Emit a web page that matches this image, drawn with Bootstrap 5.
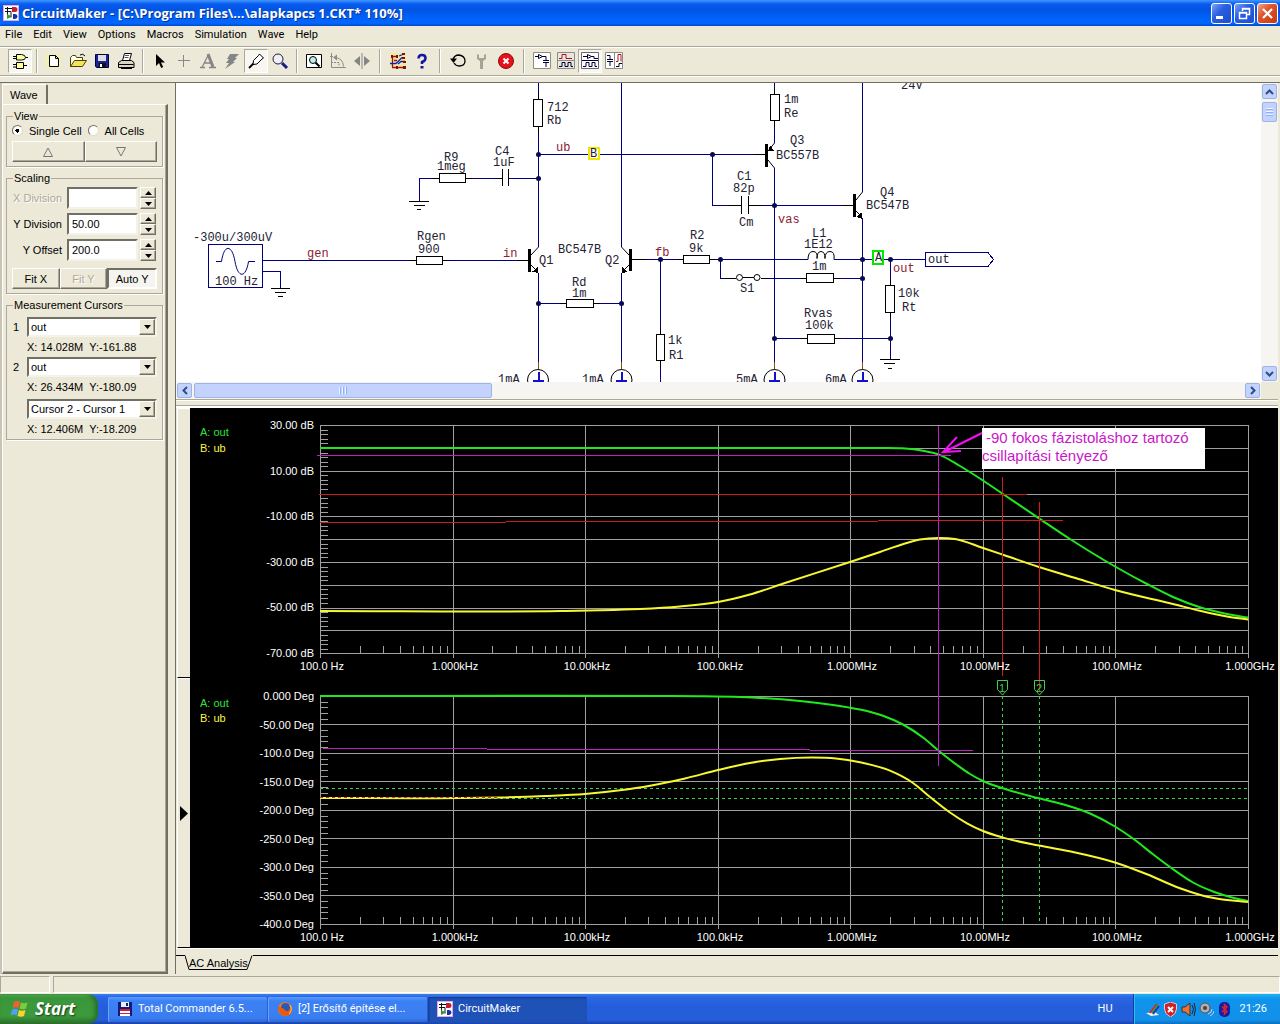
<!DOCTYPE html>
<html lang="en">
<head>
<meta charset="utf-8">
<meta name="viewport" content="width=device-width, initial-scale=1">
<title>CircuitMaker</title>
<link rel="stylesheet" href="https://cdn.jsdelivr.net/npm/bootstrap@5.3.0/dist/css/bootstrap.min.css">
<style>
:root{--face:#ece9d8;--shade:#aca899;--dark:#716f64}
body{background:var(--face);color:#000;font:11px/14px "Liberation Sans",Arial,sans-serif}
button,input,select{font:inherit;color:inherit;border-radius:0}
svg{display:block}
.ui-font{font-family:Roboto,"Noto Sans",sans-serif}
.titlebar{height:26px;background:linear-gradient(#3f97ff 0,#0a5cf0 4px,#0054e3 10px,#0062fb 18px,#0268ff 23px,#0048d0 26px);color:#fff;padding:0 2px 0 3px}
.titlebar h1{font:bold 13px/26px "Open Sans","Noto Sans",sans-serif;text-shadow:1px 1px 0 #0a2f8c;padding-left:3px}
.win-set{gap:2px}
.win-btn{width:21px;height:21px;border:1px solid #fff;border-radius:3px;padding:0;background:linear-gradient(135deg,#7fa5f5,#2a5fdf 40%,#1d4fd0)}
.win-close{background:linear-gradient(135deg,#f0a58c,#e0532c 40%,#c33a12)}
.menubar{height:20px;padding-left:5px;gap:11px}
.menubar a{color:#000;text-decoration:none;line-height:18px}
.toolbar{height:30px;border-top:1px solid var(--shade);box-shadow:inset 0 1px #fff,0 1px #fff;border-bottom:1px solid var(--shade);padding-left:8px}
.tool{width:24px;height:24px;border:1px solid transparent;background:none;padding:0;display:flex;align-items:center;justify-content:center}
.tool.on{background:#f7f6f0;border-color:var(--shade) #fff #fff var(--shade)}
.tsep{width:10px;height:24px;display:flex;justify-content:center}
.tsep::before{content:"";width:2px;background:var(--shade);border-right:1px solid #fff}
.tsep.wide{width:12px}
.workspace{margin-top:6px;border-top:1px solid var(--dark)}
.side{width:175px;padding:1px 7px 0 0;border-left:2px solid #c9c5b5}
.side-tab{width:46px;height:20px;border:1px solid #fff;border-bottom:0;border-right:2px solid var(--dark);border-radius:2px 2px 0 0;background:none;padding:0 0 0 7px;text-align:left;font-size:11px}
.side-page{border:1px solid #fff;border-right:2px solid var(--dark);border-bottom:2px solid var(--dark);padding:5px 3px;gap:5px;box-shadow:inset -1px -1px var(--shade)}
fieldset.gbox{border:1px solid var(--shade);box-shadow:1px 1px #fff;padding:0 5px 4px}
.gbox legend{float:none;width:auto;margin:0 0 0 1px;padding:0 1px;font-size:11px;line-height:12px}
.opts{gap:6px}
.opt{height:17px;gap:6px;display:flex;align-items:center}
.opt input{appearance:none;width:11px;height:11px;border-radius:50%;margin:0;border:1px solid var(--dark);border-right-color:#e0dcc9;border-bottom-color:#e0dcc9;background:#fff}
.opt input:checked{background:radial-gradient(circle,#000 2px,#fff 2px)}
.raised{background:var(--face);border:1px solid #fff;border-right-color:var(--dark);border-bottom-color:var(--dark);box-shadow:inset -1px -1px var(--shade);padding:0}
.sunk{background:#f5f4ee;border:2px solid;border-color:var(--dark) #fff #fff var(--dark);padding:0}
.wbtn{height:21px;flex:1 1 0;min-width:0}
.off,.wbtn:disabled{color:var(--shade);text-shadow:1px 1px #fff}
.srow{height:22px;gap:2px}
.srow label{width:50px;text-align:right;margin-right:3px;white-space:nowrap}
.well{background:#fff;border:2px solid;border-color:var(--dark) #f5f3e8 #f5f3e8 var(--dark)}
.srow input{width:71px;height:22px;padding:0 3px;border-radius:0}
.spin{width:16px}
.spin button{height:11px;display:flex;align-items:center;justify-content:center}
.crow{height:20px;gap:6px}
.crow .num{width:8px;padding-top:3px;margin-left:1px}
.crow .well{height:20px}
.crow select{appearance:none;border:0;background:#fff;padding:0 0 0 2px;min-width:0;outline:0}
.crow .drop{width:16px;display:flex;align-items:center;justify-content:center}
.cval{line-height:20px;padding-left:15px;white-space:pre}
.docs{border-left:1px solid var(--dark);padding-right:2px;min-width:0}
.sheet{height:299px;background:#fff}
.sheet-view{min-width:0}
#schematic{width:1085px;height:299px;flex:none}
.vbar{width:17px;background:#f6f5f1}
.hbar{height:17px;background:#f6f5f1}
.sb{width:15px;height:15px;margin:1px;padding:0;border:1px solid #9ab4e8;border-radius:2px;background:#c3d3fd;display:flex;align-items:center;justify-content:center}
.hthumb{width:298px}
.vthumb{height:20px;margin-top:2px}
.corner{width:17px;background:var(--face)}
.splitter{height:9px;border-top:1px solid var(--shade);box-shadow:inset 0 1px #fff,inset 0 -2px #fff,inset 0 -3px var(--shade)}
.gutter{width:14px;padding-left:1px}
.gutter div{flex:1 1 0;border-left:1px solid #fff;border-top:1px solid #fff;border-bottom:1px solid #000}
.plots{background:#000;min-width:0}
.plots svg{width:100%;height:auto}
.note{font:15px "Liberation Sans",Arial,sans-serif;fill:#c818c8}
.sheet-tabs{height:26px;padding-top:6px;border-top:1px solid #fff}
.sheet-tabs .lead-line{width:9px;border-top:1px solid #000;height:1px}
.sheet-tabs .rest-line{border-top:1px solid #000;height:1px}
.statusbar{height:17px;gap:3px;margin:2px 0 1px}
.statusbar div{border:1px solid var(--shade);border-right-color:#fff;border-bottom-color:#fff}
.statusbar .cell{width:50px}
.taskbar{height:30px;background:linear-gradient(#3a80f2 0,#2a66e4 3px,#245edb 12px,#245edb 26px,#1941a5 30px);color:#fff}
.start{width:98px;border:0;border-radius:0 10px 10px 0;background:linear-gradient(#5fb85f 0,#3a963a 4px,#3c9a3c 22px,#2a702a 30px);box-shadow:inset -3px 0 4px #2a6d2a;color:#fff;font:italic bold 17px/30px "Open Sans","Noto Sans",sans-serif;text-shadow:1px 1px 2px #143d14;padding:0 0 0 10px;gap:5px}
.tasks{gap:1px;margin-left:10px}
.task{width:159px;height:25px;border:0;border-radius:2px;background:linear-gradient(#5a9bff,#3c81f3 4px,#3a7df0 21px,#2d68d8);box-shadow:inset 1px 0 #6aa2f8;color:#fff;padding:0 0 0 9px;gap:5px}
.task.cur{background:#1e52b7;box-shadow:inset 1px 1px 2px #123a8a}
.lang{padding-right:20px}
.tray{background:linear-gradient(#1fb2f5,#0f93ec 5px,#1290e8 26px,#0a6cc0);border-left:1px solid #0c3f9e;box-shadow:inset 1px 0 #35b8f5;padding:0 13px 0 11px;gap:3px}
.tray time{padding-left:5px}
.net{font:12px "Liberation Mono","Courier New",monospace;fill:#223}
.net .nm{fill:#8b2233}
.lbl{font:11px "Liberation Sans",Arial,sans-serif;fill:#fff}
</style>
<script src="https://cdn.jsdelivr.net/npm/bootstrap@5.3.0/dist/js/bootstrap.bundle.min.js"></script>
</head>
<body class="d-flex flex-column min-vh-100 m-0">
<svg width="0" height="0" class="position-absolute" aria-hidden="true">
  <symbol id="appicon" viewBox="0 0 16 16"><rect width="16" height="16" fill="#e8a8d8"/><rect x="1" y="1" width="14" height="14" fill="#fff"/><path d="M2 3.500h7M4.500 2v10M2 6.500h6v6" stroke="#111" fill="none"/><path d="M9 2h3a2.500 2.500 0 0 1 0 5H9z" fill="#c02030"/><path d="M4 9l5 2.500L4 14z" fill="#2a9a3a"/><path d="M10 9h2a2.500 2.500 0 0 1 0 5h-2z" fill="#1830b0"/></symbol>
  <symbol id="up" viewBox="0 0 7 4"><path d="M0 4L3.500 0 7 4z" fill="#000"/></symbol>
  <symbol id="down" viewBox="0 0 7 4"><path d="M0 0h7L3.500 4z" fill="#000"/></symbol>
</svg>

<header class="titlebar d-flex align-items-center">
  <svg width="16" height="16"><use href="#appicon"/></svg>
  <h1 class="m-0 flex-fill text-truncate">CircuitMaker - [C:\Program Files\...\alapkapcs 1.CKT* 110%]</h1>
  <div class="win-set d-flex">
    <button class="win-btn" aria-label="Minimize"><svg viewBox="0 0 19 19"><path d="M4 12h7v3H4z" fill="#fff"/></svg></button>
    <button class="win-btn" aria-label="Restore"><svg viewBox="0 0 19 19" fill="none" stroke="#fff"><path d="M7.500 7V4.500h7v6H12M7 5h8M4.500 8.500h7v6h-7zM4 9h8" stroke-width="1.500"/></svg></button>
    <button class="win-btn win-close" aria-label="Close"><svg viewBox="0 0 19 19"><path d="M5 5l9 9M14 5l-9 9" stroke="#fff" stroke-width="2.200"/></svg></button>
  </div>
</header>
<nav class="menubar ui-font d-flex">
  <a href="#">File</a><a href="#">Edit</a><a href="#">View</a><a href="#">Options</a><a href="#">Macros</a><a href="#">Simulation</a><a href="#">Wave</a><a href="#">Help</a>
</nav>
<div class="toolbar d-flex align-items-center" role="toolbar">
  <button class="tool on" aria-label="Parts"><svg width="18" height="18" fill="#fff" stroke="#000"><path d="M5.500 2.500h5q4 .5 4 3t-4 2.500h-5z" fill="#ff9"/><path d="M2 4.500h3M2 6.500h3M14.500 5.500H17M5.500 10.500h7v6h-7zM2 12.500h3M2 15h3M13 13.500h3"/><path d="M6 11h6v5H6z" fill="#ff9" stroke="none"/></svg></button>
  <span class="tsep"></span>
  <button class="tool" aria-label="New"><svg width="18" height="18"><path d="M1 2h15v14H1z" fill="#ffff60" opacity=".35"/><path d="M4.500 3.500h6l3 3v8h-9zM10.500 3.500v3h3" fill="#fff" stroke="#000"/></svg></button>
  <button class="tool" aria-label="Open"><svg width="18" height="18"><path d="M1.500 14.500v-9l2-2h3l1 2h6v3" fill="#ffe" stroke="#4a4200"/><path d="M1.500 14.500l4-6h12l-4 6z" fill="#f5e45a" stroke="#4a4200"/><path d="M11 3q3-2 5 1" fill="none" stroke="#000"/></svg></button>
  <button class="tool" aria-label="Save"><svg width="18" height="18"><path d="M2.500 2.500h13v13h-12l-1-1z" fill="#1c2490" stroke="#000040"/><path d="M5 3h8v6H5z" fill="#dcdce4"/><path d="M6 11h7v4H6z" fill="#111"/><path d="M7 12h2v3H7z" fill="#fff"/></svg></button>
  <button class="tool" aria-label="Print"><svg width="18" height="18" stroke="#000" fill="#d8d5c5"><path d="M5.500 8.500l2-7h7l-2 7z" fill="#fff"/><path d="M8 3.500h4M7.500 5.500h4" stroke="#555"/><path d="M1.500 10.500l3-2h10l2.500 2v5h-15.500zM1.500 12.500h15M4 16.500h11"/></svg></button>
  <span class="tsep"></span>
  <button class="tool" aria-label="Arrow"><svg width="18" height="18"><path d="M5 2v12l3-3 2.200 5 2-1L10 10.500h4z"/></svg></button>
  <button class="tool" aria-label="Wire"><svg width="18" height="18"><path d="M3 8.500h12M8.500 3v12" stroke="#888"/></svg></button>
  <button class="tool" aria-label="Text"><svg width="18" height="18" fill="none" stroke="#858585"><path d="M3 15.500l6-12M5 11h7" stroke-width="1.300"/><path d="M9 2l5 13" stroke-width="3"/><path d="M1 15.500h5M10 15.500h7" stroke-width="1.500"/></svg></button>
  <button class="tool" aria-label="Delete"><svg width="18" height="18"><path d="M7 2h9l-4 4h2l-4 4h2l-10 7 4-6H3l3-4H4z" fill="#858585"/></svg></button>
  <button class="tool on" aria-label="Probe"><svg width="18" height="18" fill="#fff" stroke="#000"><path d="M2 16l5-5" stroke-width="1.800"/><path d="M6.500 8.500l5-5 1-1.500 4 4-1.500 1-5 5-4 .5z"/></svg></button>
  <button class="tool" aria-label="Zoom"><svg width="18" height="18"><circle cx="7" cy="7" r="5" fill="#eef" stroke="#222"/><path d="M11 11l5 5" stroke="#1a1a90" stroke-width="3"/></svg></button>
  <span class="tsep"></span>
  <button class="tool" aria-label="Fit"><svg width="18" height="18" fill="none" stroke="#000"><path d="M1.500 2.500h15v13h-15z" fill="#fff"/><circle cx="8" cy="8" r="3.500" fill="#bee"/><path d="M10.500 10.500l4 4" stroke-width="2"/></svg></button>
  <button class="tool" aria-label="Rotate"><svg width="18" height="18" fill="none" stroke="#8c8c84"><path d="M2.500 1v14.500H17M1 4.500h3M5 5.500q9 0 9.500 9" /><path d="M2 10.500h8v4" stroke-dasharray="2 1"/><path d="M4 5.500l4-3v6z" fill="#8c8c84" stroke="none"/></svg></button>
  <button class="tool" aria-label="Mirror"><svg width="18" height="18" fill="#858585"><path d="M7 4v10L1 9zM11 4v10l6-5zM8.500 1h1v16h-1z"/></svg></button>
  <span class="tsep wide"></span>
  <button class="tool" aria-label="Trace"><svg width="18" height="18" fill="none"><path d="M1 1h16v15H1z" fill="#ffe860" opacity=".4"/><path d="M3 4.500h5M3.500 4v11M3 15.500h13M5 8.500h3" stroke="#a01010" stroke-width="1.300"/><path d="M1 11.500h6l6-6M10 4l5-2M9 12l3-2.500h4" stroke="#1020b0" stroke-width="1.300"/><path d="M2 3h2v3H2zM13 1h3v2h-3zM13 5h3v2h-3zM14 9h3v2h-3zM14 14h3v3h-3zM7 14h2v3H7zM7 3h2v3H7z" fill="#801010"/></svg></button>
  <button class="tool" aria-label="Help"><svg width="18" height="18"><path d="M5.500 6.500q0-3.500 3.500-3.500t3.500 3-3.500 4v2" fill="none" stroke="#1414a8" stroke-width="2.500"/><path d="M7.500 14h3v2.500h-3z" fill="#1414a8"/></svg></button>
  <span class="tsep wide"></span>
  <button class="tool" aria-label="Reset"><svg width="18" height="18"><path d="M4 8q1-5 6-5 6 1 6 6t-6 5q-3 0-5-3" fill="none" stroke="#000" stroke-width="1.300"/><path d="M1 6.500h7L4.500 11z"/></svg></button>
  <button class="tool" aria-label="Setup"><svg width="18" height="18"><path d="M4 2v5l3 2v8h3V9l3-2V2l-2 1v3H6V3z" fill="#a5a398"/></svg></button>
  <button class="tool" aria-label="Stop"><svg width="18" height="18"><circle cx="9" cy="9" r="7.500" fill="#e8101a" stroke="#8c0a0a"/><path d="M6.500 6.500l5 5M11.500 6.500l-5 5" stroke="#fff" stroke-width="2"/></svg></button>
  <span class="tsep wide"></span>
  <button class="tool" aria-label="Schematic only"><svg width="18" height="18" fill="#fff" stroke="#003"><path d="M.5.5h17v16H.500z" stroke="#8c8c84"/><path d="M2 4.500h3M5.500 2.500l4 2-4 2zM9 4.500h4v4M10 8.500h6M10 10.500h6M13 11v4"/></svg></button>
  <button class="tool" aria-label="Waves only"><svg width="18" height="18" fill="none" stroke="#003"><path d="M.5.500h17v16H.500z" fill="#e8e6e0" stroke="#8c8c84"/><path d="M2 6.500h3v-4h4v4h6" stroke="#b01020"/><path d="M1 8.500h16" stroke="#8c8c84"/><path d="M2 14.500h3v-4h3v4h3v-4h3v4h2"/></svg></button>
  <button class="tool on" aria-label="Split horizontally"><svg width="18" height="18" fill="none" stroke="#003"><path d="M.5.500h17v16H.500z" fill="#fff" stroke="#667"/><path d="M2 4.500h4M6.500 2.500l4 2-4 2zM10 4.500h3v2h4M1 8.500h16M2 14.500h3v-4h3v4h3v-4h3v4h2"/></svg></button>
  <button class="tool" aria-label="Split vertically"><svg width="18" height="18" fill="none" stroke="#003"><path d="M.5.500h17v16H.500z" fill="#fff" stroke="#8c8c84"/><path d="M9.500 1v15" stroke="#8c8c84"/><path d="M2 3.500h3v4M2 7.500h6M2 9.500h6M5 10v4"/><path d="M11 9.500h2v-7h3v7" stroke="#b01020"/><path d="M11 14.500h3v-3h3" /></svg></button>
</div>

<main class="workspace d-flex flex-fill">
  <aside class="side d-flex flex-column flex-shrink-0">
    <button class="side-tab">Wave</button>
    <div class="side-page d-flex flex-column flex-fill">
      <fieldset class="gbox">
        <legend>View</legend>
        <div class="opts d-flex">
          <label class="opt"><input type="radio" name="cells" checked>Single Cell</label>
          <label class="opt"><input type="radio" name="cells">All Cells</label>
        </div>
        <div class="d-flex" style="padding-top:2px">
          <button class="raised wbtn" aria-label="Previous cell"><svg class="mx-auto" width="10" height="10" fill="none" stroke="#777"><path d="M.5 9.500h9L5 1z"/></svg></button>
          <button class="raised wbtn" aria-label="Next cell"><svg class="mx-auto" width="10" height="10" fill="none" stroke="#777"><path d="M.5.500h9L5 9z"/></svg></button>
        </div>
      </fieldset>
      <fieldset class="gbox">
        <legend>Scaling</legend>
        <div class="d-flex flex-column gap-1" style="padding-top:3px">
          <div class="srow d-flex align-items-center"><label for="xd" class="off">X Division</label><input id="xd" class="well" value="" disabled><div class="spin"><button class="raised w-100" aria-label="Increase X Division"><svg width="7" height="4"><use href="#up"/></svg></button><button class="raised w-100" aria-label="Decrease X Division"><svg width="7" height="4"><use href="#down"/></svg></button></div></div>
          <div class="srow d-flex align-items-center"><label for="yd">Y Division</label><input id="yd" class="well" value="50.00"><div class="spin"><button class="raised w-100" aria-label="Increase Y Division"><svg width="7" height="4"><use href="#up"/></svg></button><button class="raised w-100" aria-label="Decrease Y Division"><svg width="7" height="4"><use href="#down"/></svg></button></div></div>
          <div class="srow d-flex align-items-center"><label for="yo">Y Offset</label><input id="yo" class="well" value="200.0"><div class="spin"><button class="raised w-100" aria-label="Increase Y Offset"><svg width="7" height="4"><use href="#up"/></svg></button><button class="raised w-100" aria-label="Decrease Y Offset"><svg width="7" height="4"><use href="#down"/></svg></button></div></div>
        </div>
        <div class="d-flex" style="padding-top:7px">
          <button class="raised wbtn">Fit X</button><button class="raised wbtn" disabled>Fit Y</button><button class="sunk wbtn">Auto Y</button>
        </div>
      </fieldset>
      <fieldset class="gbox pb-0">
        <legend>Measurement Cursors</legend>
        <div style="padding-top:6px">
          <div class="crow d-flex"><label class="num" for="c1">1</label><div class="well d-flex flex-fill"><select id="c1" class="flex-fill"><option>out</option><option>ub</option></select><span class="drop raised"><svg width="7" height="4"><use href="#down"/></svg></span></div></div>
          <div class="cval">X: 14.028M  Y:-161.88</div>
          <div class="crow d-flex"><label class="num" for="c2">2</label><div class="well d-flex flex-fill"><select id="c2" class="flex-fill"><option>out</option><option>ub</option></select><span class="drop raised"><svg width="7" height="4"><use href="#down"/></svg></span></div></div>
          <div class="cval">X: 26.434M  Y:-180.09</div>
          <div class="crow d-flex" style="margin-top:2px"><span class="num"></span><div class="well d-flex flex-fill"><select aria-label="Difference" class="flex-fill"><option>Cursor 2 - Cursor 1</option></select><span class="drop raised"><svg width="7" height="4"><use href="#down"/></svg></span></div></div>
          <div class="cval">X: 12.406M  Y:-18.209</div>
        </div>
      </fieldset>
    </div>
  </aside>

  <section class="docs d-flex flex-column flex-fill">
    <div class="sheet d-flex">
      <div class="sheet-view flex-fill overflow-hidden d-flex">
      <svg id="schematic" viewBox="176 83 1085 299" shape-rendering="crispEdges" fill="none">
        <g stroke="#00007c">
          <path d="M538.500 83V247M538.500 273V382M621.500 83V247M621.500 273V382M774.500 83V143M774.500 168V382M862.500 83V192M862.500 218V382"/>
          <path d="M538 154.500H766M419.500 201V178.500H502M509 178.500H538M712.500 154V205.500H741M749 205.500H854M263 260.500H529M263 271.500H280.500V288"/>
          <path d="M538 303.500H621M632 259.500H808M834 259.500H925M660.500 259V382M720.500 259V278.500H736M761 278.500H862M774 338.500H890M890.500 259V359"/>
          <rect x="208.500" y="244.500" width="54" height="43"/>
          <path d="M925.500 252.500H988L993.500 259.500 988 266.500H925.500z" fill="#fff"/>
        </g>
        <path d="M216 261.500h5.500C224 244 232 244 235 261.500S246 278 248.500 261.500H255" stroke="#00007c" shape-rendering="auto"/>
        <g stroke="#000" fill="#fff">
          <path d="M538.500 93V133M774.500 89V127M432 178.500H472M495 178.500H502M410 260.500H449M517 260.500H529M754 154.500H766M842 205.500H854M632 259.500H646M678 259.500H715M801 278.500H840M560 303.500H600M660.500 328V367M800 338.500H841M890.500 280V318M725 278.500H736M761 278.500H768M728 205.500H741M749 205.500H762"/>
          <rect x="533.500" y="99.500" width="9" height="27"/><rect x="770.500" y="94.500" width="9" height="26"/>
          <rect x="439.500" y="173.500" width="26" height="9"/><rect x="416.500" y="256.500" width="26" height="8"/>
          <rect x="683.500" y="255.500" width="26" height="8"/><rect x="566.500" y="299.500" width="27" height="8"/>
          <rect x="656.500" y="334.500" width="8" height="26"/><rect x="806.500" y="273.500" width="27" height="9"/>
          <rect x="807.500" y="334.500" width="27" height="9"/><rect x="885.500" y="285.500" width="9" height="27"/>
          <path d="M502.500 169v17M508.500 169v17M741.500 196v18M748.500 196v18"/>
          <path d="M409 201.500h20M414 205.500h11M417 209.500h4M271 288.500h19M275 292.500h11M278 296.500h5M880 359.500h20M884 363.500h11M888 368.500h4"/>
        </g>
        <g stroke="#000" shape-rendering="auto">
          <path d="M531 255l7.500-8M531 265l7 7M629 255l-7.500-8M629 265l-7 7M768 151l6.500-8M768 160l6.500 8M856 200l6.500-8M856 211l6 6"/>
          <path d="M742 277.500h12"/><circle cx="739.500" cy="277.500" r="3" fill="#fff"/><circle cx="757" cy="277.500" r="3" fill="#fff"/>
          <path d="M808 259.500q0-8 5-8t4 7q0-7 4-7t4 7q0-7 5-7t4 8"/>
          <g fill="#fff"><circle cx="538" cy="380" r="10.500"/><circle cx="621.500" cy="380" r="10.500"/><circle cx="774.500" cy="380" r="10.500"/><circle cx="862.500" cy="380" r="10.500"/></g>
        </g>
        <g fill="#000"><path d="M528 249h3v23h-3zM629 249h3v22h-3zM765 144h3v23h-3zM853 194h3v23h-3z"/>
          <path d="M538.500 273.500l-6-2 5-4.500zM621.500 273.500l6-2-5-4.500zM768 151.500l6-1-4-5zM862.500 219l-6-2 5-4.500z"/></g>
        <path d="M538.500 372v9M533 381h11M621.500 372v9M616 381h11M774.500 372v9M769 381h11M862.500 372v9M857 381h11" stroke="#1010d0" stroke-width="2"/>
        <path d="M538.500 362v7M621.500 362v7M774.500 362v7M862.500 362v7" stroke="#8a4a20"/>
        <g id="nodes" fill="#0a0a50" shape-rendering="auto"></g>
        <rect x="588.500" y="147.500" width="10" height="11" fill="#fff" stroke="#f0e800" stroke-width="2"/>
        <rect x="873" y="251" width="10" height="13" fill="#fff" stroke="#00e800" stroke-width="2"/>
        <g id="netText" class="net"></g>
      </svg>
      </div>
      <div class="vbar d-flex flex-column flex-shrink-0">
        <button class="sb" aria-label="Scroll up"><svg width="9" height="6"><path d="M1 5l3.500-3.500L8 5" fill="none" stroke="#2f4c85" stroke-width="2"/></svg></button>
        <div class="sb vthumb"><svg width="7" height="8"><path d="M0 .5h7M0 3.500h7M0 6.500h7" stroke="#eef4fe"/><path d="M0 1.500h7M0 4.500h7M0 7.500h7" stroke="#8cb0f8"/></svg></div>
        <button class="sb mt-auto" aria-label="Scroll down"><svg width="9" height="6"><path d="M1 1l3.500 3.500L8 1" fill="none" stroke="#2f4c85" stroke-width="2"/></svg></button>
      </div>
    </div>
    <div class="hbar d-flex">
      <button class="sb" aria-label="Scroll left"><svg width="6" height="9"><path d="M5 1L1.500 4.500 5 8" fill="none" stroke="#2f4c85" stroke-width="2"/></svg></button>
      <div class="sb hthumb"><svg width="8" height="7"><path d="M.5 0v7M3.500 0v7M6.500 0v7" stroke="#eef4fe"/><path d="M1.500 0v7M4.500 0v7M7.500 0v7" stroke="#8cb0f8"/></svg></div>
      <button class="sb ms-auto" aria-label="Scroll right"><svg width="6" height="9"><path d="M1 1l3.500 3.500L1 8" fill="none" stroke="#2f4c85" stroke-width="2"/></svg></button>
      <div class="corner"></div>
    </div>
    <div class="splitter"></div>
    <div class="d-flex">
      <div class="gutter d-flex flex-column flex-shrink-0">
        <div></div>
        <div class="d-flex align-items-center"><svg width="11" height="15"><path d="M2 0l8 7.500L2 15z"/></svg></div>
      </div>
      <div class="plots flex-fill">
        <svg id="bode" viewBox="190 408 1088 540" fill="none">
          <g id="grid" stroke="#a0a0a0" shape-rendering="crispEdges"></g>
          <g stroke="#30d850" stroke-dasharray="3 3" shape-rendering="crispEdges"><path d="M320 788.500H1248M320 798.500H1248M1002.500 696V924M1039.500 696V924"/></g>
          <g id="curves" stroke-width="2"></g>
          <path d="M320 797.500H500" stroke="#c04020" stroke-dasharray="3 3" shape-rendering="crispEdges"/>
          <g stroke="#d01c1c" shape-rendering="crispEdges"><path d="M319 494.500H1027M320 522.500H506M506 521.500H878M878 520.500H1063M1002.500 477V676M1039.500 502V692"/></g>
          <g stroke="#c020c0" shape-rendering="crispEdges"><path d="M317 455.500H951M938.500 426V766M323 748.500H487M487 749.500H810M810 750.500H973"/></g>
          <g stroke="#40d050"><path d="M997.500 680.500h10v9l-5 5.500-5-5.500zM1034.500 680.500h10v9l-5 5.500-5-5.500z"/></g>
          <rect x="982" y="428" width="223" height="41" fill="#fff"/>
          <path d="M982 433L944 452M957 437L943 452 961 451" stroke="#f010f0" stroke-width="2"/>
          <text x="986" y="443" class="note">-90 fokos fázistoláshoz tartozó</text>
          <text x="982" y="461" class="note">csillapítási tényező</text>
          <g id="labels" class="lbl"></g>
        </svg>
      </div>
    </div>
    <div class="sheet-tabs d-flex">
      <span class="lead-line"></span>
      <svg width="68" height="16" fill="none"><path d="M0 .5L4 14.500H62L67 .500" stroke="#000"/><text x="4" y="12" font-size="11" fill="#000">AC Analysis</text></svg>
      <span class="rest-line flex-fill"></span>
    </div>
  </section>
</main>
<div class="statusbar d-flex"><div class="cell"></div><div class="flex-fill"></div></div>

<footer class="taskbar ui-font d-flex">
  <button class="start d-flex align-items-center"><svg width="20" height="20"><path d="M4 3q3-2 6 0L8.500 9q-3-1.500-6 0z" fill="#f06030"/><path d="M11 3.500q3 1.500 6.500 0L16 9.500q-3 1.500-6.500 0z" fill="#7ccc40"/><path d="M2.200 10.500q3-1.500 6 0L6.500 16.500q-3-2-6 0z" fill="#50a0f0"/><path d="M9 11q3 1.500 6.500 0l-1.500 6q-3 1.500-6.500 0z" fill="#fcd030"/></svg>Start</button>
  <div class="tasks d-flex align-items-center">
    <button class="task d-flex align-items-center"><svg width="16" height="16"><path d="M1 1h14v14H1z" fill="#101a80"/><path d="M4 1h8v5H4z" fill="#eee"/><path d="M9 2h2v3H9z" fill="#101a80"/><path d="M3 8h10v7H3z" fill="#fff"/><path d="M3 8h10v2H3zM3 12h10v1H3z" fill="#d02030"/></svg>Total Commander 6.5...</button>
    <button class="task d-flex align-items-center"><svg width="16" height="16"><circle cx="8" cy="8" r="7" fill="#f07818"/><circle cx="8.500" cy="6.500" r="4.500" fill="#2a58b8"/><path d="M1 5q2 2 4 2t4 3q4 1 5-5 3 8-4 10Q1 15 1 5z" fill="#e85a10"/><path d="M13 4q3 5-1 9" stroke="#ffd040" fill="none"/></svg>[2] Erősítő építése el...</button>
    <button class="task cur d-flex align-items-center"><svg width="16" height="16"><use href="#appicon"/></svg>CircuitMaker</button>
  </div>
  <div class="lang ms-auto d-flex align-items-center">HU</div>
  <div class="tray d-flex align-items-center">
    <svg width="15" height="15"><path d="M1 11l9-1 4 3-8 1z" fill="#eee"/><path d="M5 11l7-9" stroke="#e02020" stroke-width="2"/><path d="M7 11l6-8" stroke="#20b030" stroke-width="2"/><path d="M8 12l6-8" stroke="#2030c0" stroke-width="2"/></svg>
    <svg width="15" height="15"><path d="M7.500 0l6 2v5q0 5-6 8-6-3-6-8V2z" fill="#d02028" stroke="#eee" stroke-width=".8"/><path d="M5 5l5 5M10 5l-5 5" stroke="#fff" stroke-width="2"/></svg>
    <svg width="15" height="15"><path d="M1 5h3l5-4v13l-5-4H1z" fill="#f07030" stroke="#333"/><path d="M11 3q3 4 0 9M13 1q3 6 0 13" fill="none" stroke="#123"/></svg>
    <svg width="15" height="15"><circle cx="6" cy="6" r="5" fill="#b0b0b0" stroke="#555"/><circle cx="6" cy="6" r="2" fill="#444"/><path d="M9 12q4-1 4-5M11 14q4-2 4-5" fill="none" stroke="#ccd"/></svg>
    <svg width="15" height="15"><rect x="2" width="11" height="15" rx="5" fill="#1020a0"/><path d="M5 4.500l5 5-2.500 2.500V2.500L10 5l-5 5" fill="none" stroke="#e02030" stroke-width="1.500"/></svg>
    <time>21:26</time>
  </div>
</footer>

<script>
const NS = "http://www.w3.org/2000/svg";
function add(parent, tag, attrs, text) {
  const el = document.createElementNS(NS, tag);
  for (const k in attrs) el.setAttribute(k, attrs[k]);
  if (text !== undefined) el.textContent = text;
  document.getElementById(parent).appendChild(el);
}
/* Junction dots of the schematic */
[[538,154],[538,178],[538,303],[621,303],[712,154],[774,205],[660,259],[720,259],[862,259],[890,259],[862,278],[774,338],[890,338]]
  .forEach(([x, y]) => add("nodes", "circle", {cx: x + .5, cy: y + .5, r: 2.5}));
/* Part names and values */
[[547,111,"712"],[547,124,"Rb"],[784,103,"1m"],[784,117,"Re"],[901,89,"24V"],[790,144,"Q3"],[776,159,"BC557B"],[737,180,"C1"],[733,192,"82p"],[739,226,"Cm"],
 [880,196,"Q4"],[866,209,"BC547B"],[444,161,"R9"],[437,170,"1meg"],[495,155,"C4"],[493,166,"1uF"],[417,240,"Rgen"],[418,253,"900"],[539,264,"Q1"],[558,253,"BC547B"],
 [605,264,"Q2"],[590,157,"B"],[690,239,"R2"],[689,252,"9k"],[812,237,"L1"],[804,248,"1E12"],[812,270,"1m"],[740,292,"S1"],[572,286,"Rd"],[572,297,"1m"],[668,344,"1k"],
 [669,359,"R1"],[804,317,"Rvas"],[805,329,"100k"],[898,297,"10k"],[902,311,"Rt"],[928,263,"out"],[875,261,"A"],[498,383,"1mA"],[582,383,"1mA"],[736,383,"5mA"],[825,383,"6mA"],
 [193,241,"-300u/300uV"],[215,285,"100 Hz"]].forEach(([x, y, t]) => add("netText", "text", {x, y}, t));
/* Net names */
[[556,151,"ub"],[778,223,"vas"],[307,257,"gen"],[503,257,"in"],[655,256,"fb"],[893,272,"out"]]
  .forEach(([x, y, t]) => add("netText", "text", {x, y, class: "nm"}, t));

/* Plot grids */
const X0 = 320.5, DEC = 928 / 7;
function grid(top, start, rows) {
  let d = "";
  for (let i = 0; i <= rows; i++) d += `M320 ${Math.round(start + i * 228 / rows) + .5}H1249`;
  for (let i = 1; i < rows * 5; i++) d += `M320 ${Math.round(start + i * 228 / (rows * 5)) + .5}h8`;
  for (let i = 0; i <= 7; i++) {
    const x = Math.floor(X0 + i * DEC) + .5;
    d += `M${x} ${top}V${top + 233}`;
    if (i < 7) for (let k = 2; k < 10; k++) d += `M${Math.floor(X0 + (i + Math.log10(k)) * DEC) + .5} ${top + 221}v7`;
  }
  add("grid", "path", {d});
}
grid(425, 425.2, 10); grid(696, 695.8, 8);
["30.00 dB","10.00 dB","-10.00 dB","-30.00 dB","-50.00 dB","-70.00 dB"]
  .forEach((t, i) => add("labels", "text", {x: 314, y: Math.round(429 + i * 45.6), "text-anchor": "end"}, t));
["0.000","-50.00","-100.0","-150.0","-200.0","-250.0","-300.0","-350.0","-400.0"]
  .forEach((t, i) => add("labels", "text", {x: 314, y: Math.round(700 + i * 28.5), "text-anchor": "end"}, t + " Deg"));
["100.0 Hz","1.000kHz","10.00kHz","100.0kHz","1.000MHz","10.00MHz","100.0MHz","1.000GHz"].forEach((t, i) => {
  const x = Math.round(321 + i * DEC);
  add("labels", "text", {x: x + 1, y: 670, "text-anchor": "middle"}, t);
  add("labels", "text", {x: x + 1, y: 941, "text-anchor": "middle"}, t);
});
[[436, 452], [707, 722]].forEach(([a, b]) => {
  add("labels", "text", {x: 200, y: a, style: "fill:#30e040"}, "A: out");
  add("labels", "text", {x: 200, y: b, style: "fill:#f8f840"}, "B: ub");
});
[[999, "1"], [1036, "2"]].forEach(([x, t]) => add("labels", "text", {x, y: 692, style: "fill:#40d050"}, t));

/* Traces, as smooth curves through the sample points */
function curve(color, p) {
  const n = p.length, s = [], m = [];
  for (let i = 0; i < n - 1; i++) s.push((p[i + 1][1] - p[i][1]) / (p[i + 1][0] - p[i][0]));
  for (let i = 0; i < n; i++) {
    if (i === 0 || i === n - 1) { m.push(s[Math.min(i, n - 2)]); continue; }
    const h0 = p[i][0] - p[i - 1][0], h1 = p[i + 1][0] - p[i][0];
    m.push((h1 * s[i - 1] + h0 * s[i]) / (h0 + h1));
  }
  let d = `M${p[0]}`;
  for (let i = 0; i < n - 1; i++) {
    const b = p[i], c = p[i + 1], h = (c[0] - b[0]) / 3;
    d += `C${b[0] + h} ${b[1] + m[i] * h} ${c[0] - h} ${c[1] - m[i + 1] * h} ${c}`;
  }
  add("curves", "path", {d, stroke: color});
}
const G = "#20e820", Y = "#f8f830";
curve(G, [[320,448],[860,448],[880,448],[902,448.3],[923,450.7],[939,454.6],[960,466],[983,480.5],[1003,494],[1039,518.3],[1070,539],[1115,566.5],[1147,584],[1173,597],[1200,607.3],[1227,614],[1248,617.6]]);
curve(Y, [[320,611],[560,611],[600,610.3],[640,609],[680,606.4],[718,602],[750,594.5],[785,583],[850,562],[880,552],[905,543.5],[920,539.6],[938,538],[955,539],[983,548],[1003,554.7],[1039,567],[1077,578.5],[1115,590],[1173,604],[1200,610.8],[1227,616.5],[1248,619.5]]);
curve(G, [[320,696],[660,696],[700,696.2],[740,697],[800,701],[840,706],[860,709.5],[883,715.7],[903,724.5],[923,737.5],[939,751],[957,765],[970,774],[983,781],[1002,788],[1039,798.3],[1067,805.5],[1090,813.5],[1115,826.5],[1135,840],[1153,854.3],[1172,868.5],[1193,882.5],[1213,891.5],[1230,897],[1248,901]]);
curve(Y, [[320,798],[460,798],[500,797.4],[545,796],[585,794],[620,790.3],[650,785.8],[685,778.5],[718,770],[750,763],[780,759],[812,757.5],[836,758.5],[860,762.3],[890,770.7],[913,783],[930,797],[950,812.5],[967,823.3],[983,831],[1003,837.6],[1039,845.6],[1073,852],[1115,862.5],[1147,874.3],[1180,888.3],[1207,896.7],[1230,900.3],[1248,902]]);
</script>
</body>
</html>
